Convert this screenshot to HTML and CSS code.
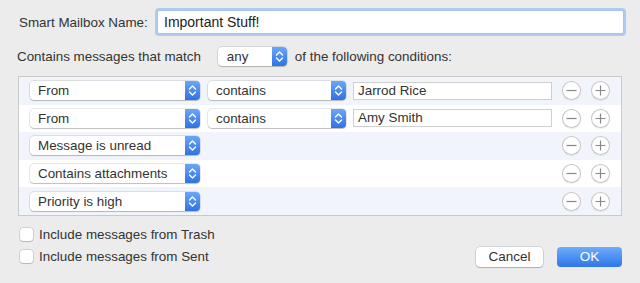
FILE: index.html
```html
<!DOCTYPE html>
<html>
<head>
<meta charset="utf-8">
<link rel="stylesheet" href="styles.css">
</head>
<body>
<div class="dialog">
  <div class="name-row">
    <label class="label">Smart Mailbox Name:</label>
    <div class="name-input">Important Stuff!</div>
  </div>
  <div class="match-row">
    <span>Contains messages that match</span>
    <div class="popup popup-any"><span class="popup-text">any</span><span class="stepper"><svg viewBox="0 0 15 19" width="15" height="19"><path d="M4.5 8 L7.5 5 L10.5 8 M4.5 11 L7.5 14 L10.5 11" fill="none" stroke="#fff" stroke-width="1.4" stroke-linecap="round" stroke-linejoin="round"/></svg></span></div>
    <span>of the following conditions:</span>
  </div>
  <div class="rules">
    <div class="rule alt">
      <div class="popup popup-field"><span class="popup-text">From</span><span class="stepper"><svg viewBox="0 0 15 19" width="15" height="19"><path d="M4.5 8 L7.5 5 L10.5 8 M4.5 11 L7.5 14 L10.5 11" fill="none" stroke="#fff" stroke-width="1.4" stroke-linecap="round" stroke-linejoin="round"/></svg></span></div>
      <div class="popup popup-op"><span class="popup-text">contains</span><span class="stepper"><svg viewBox="0 0 15 19" width="15" height="19"><path d="M4.5 8 L7.5 5 L10.5 8 M4.5 11 L7.5 14 L10.5 11" fill="none" stroke="#fff" stroke-width="1.4" stroke-linecap="round" stroke-linejoin="round"/></svg></span></div>
      <div class="text-field">Jarrod Rice</div>
      <div class="spacer"></div>
      <div class="round-btn"><svg viewBox="0 0 19 19" width="19" height="19"><path d="M4.5 9.5 H14.5" stroke="#888" stroke-width="1.2"/></svg></div>
      <div class="round-btn"><svg viewBox="0 0 19 19" width="19" height="19"><path d="M4.5 9.5 H14.5 M9.5 4.5 V14.5" stroke="#888" stroke-width="1.2"/></svg></div>
    </div>
    <div class="rule">
      <div class="popup popup-field"><span class="popup-text">From</span><span class="stepper"><svg viewBox="0 0 15 19" width="15" height="19"><path d="M4.5 8 L7.5 5 L10.5 8 M4.5 11 L7.5 14 L10.5 11" fill="none" stroke="#fff" stroke-width="1.4" stroke-linecap="round" stroke-linejoin="round"/></svg></span></div>
      <div class="popup popup-op"><span class="popup-text">contains</span><span class="stepper"><svg viewBox="0 0 15 19" width="15" height="19"><path d="M4.5 8 L7.5 5 L10.5 8 M4.5 11 L7.5 14 L10.5 11" fill="none" stroke="#fff" stroke-width="1.4" stroke-linecap="round" stroke-linejoin="round"/></svg></span></div>
      <div class="text-field">Amy Smith</div>
      <div class="spacer"></div>
      <div class="round-btn"><svg viewBox="0 0 19 19" width="19" height="19"><path d="M4.5 9.5 H14.5" stroke="#888" stroke-width="1.2"/></svg></div>
      <div class="round-btn"><svg viewBox="0 0 19 19" width="19" height="19"><path d="M4.5 9.5 H14.5 M9.5 4.5 V14.5" stroke="#888" stroke-width="1.2"/></svg></div>
    </div>
    <div class="rule alt">
      <div class="popup popup-field"><span class="popup-text">Message is unread</span><span class="stepper"><svg viewBox="0 0 15 19" width="15" height="19"><path d="M4.5 8 L7.5 5 L10.5 8 M4.5 11 L7.5 14 L10.5 11" fill="none" stroke="#fff" stroke-width="1.4" stroke-linecap="round" stroke-linejoin="round"/></svg></span></div>
      <div class="spacer"></div>
      <div class="round-btn"><svg viewBox="0 0 19 19" width="19" height="19"><path d="M4.5 9.5 H14.5" stroke="#888" stroke-width="1.2"/></svg></div>
      <div class="round-btn"><svg viewBox="0 0 19 19" width="19" height="19"><path d="M4.5 9.5 H14.5 M9.5 4.5 V14.5" stroke="#888" stroke-width="1.2"/></svg></div>
    </div>
    <div class="rule">
      <div class="popup popup-field"><span class="popup-text">Contains attachments</span><span class="stepper"><svg viewBox="0 0 15 19" width="15" height="19"><path d="M4.5 8 L7.5 5 L10.5 8 M4.5 11 L7.5 14 L10.5 11" fill="none" stroke="#fff" stroke-width="1.4" stroke-linecap="round" stroke-linejoin="round"/></svg></span></div>
      <div class="spacer"></div>
      <div class="round-btn"><svg viewBox="0 0 19 19" width="19" height="19"><path d="M4.5 9.5 H14.5" stroke="#888" stroke-width="1.2"/></svg></div>
      <div class="round-btn"><svg viewBox="0 0 19 19" width="19" height="19"><path d="M4.5 9.5 H14.5 M9.5 4.5 V14.5" stroke="#888" stroke-width="1.2"/></svg></div>
    </div>
    <div class="rule alt">
      <div class="popup popup-field"><span class="popup-text">Priority is high</span><span class="stepper"><svg viewBox="0 0 15 19" width="15" height="19"><path d="M4.5 8 L7.5 5 L10.5 8 M4.5 11 L7.5 14 L10.5 11" fill="none" stroke="#fff" stroke-width="1.4" stroke-linecap="round" stroke-linejoin="round"/></svg></span></div>
      <div class="spacer"></div>
      <div class="round-btn"><svg viewBox="0 0 19 19" width="19" height="19"><path d="M4.5 9.5 H14.5" stroke="#888" stroke-width="1.2"/></svg></div>
      <div class="round-btn"><svg viewBox="0 0 19 19" width="19" height="19"><path d="M4.5 9.5 H14.5 M9.5 4.5 V14.5" stroke="#888" stroke-width="1.2"/></svg></div>
    </div>
  </div>
  <div class="bottom">
    <div class="checks">
      <label class="check"><span class="box"></span>Include messages from Trash</label>
      <label class="check"><span class="box"></span>Include messages from Sent</label>
    </div>
    <div class="buttons">
      <div class="btn cancel">Cancel</div>
      <div class="btn ok">OK</div>
    </div>
  </div>
</div>
</body>
</html>
```
FILE: styles.css
```css
html, body {
  margin: 0;
  padding: 0;
  background: #ececec;
  width: 640px;
  height: 283px;
  overflow: hidden;
}
body {
  font-family: "Liberation Sans", Arial, sans-serif;
  font-size: 13.4px;
  color: #333;
}
.dialog {
  padding: 10px 18px 0 18px;
}
.name-row {
  display: flex;
  align-items: center;
  height: 24px;
}
.label {
  margin-left: 1px;
  width: 138px;
}
.name-input {
  flex: 1;
  height: 24px;
  box-sizing: border-box;
  margin-right: -2px;
  background: #fff;
  border: 1px solid #a9c3e9;
  box-shadow: 0 0 0 2px #b0cbf0;
  border-radius: 2px;
  padding-left: 6px;
  line-height: 22px;
  font-size: 14px;
  color: #222;
}
.match-row {
  display: flex;
  align-items: center;
  height: 20px;
  margin-top: 12px;
}
.match-row > span:first-child {
  margin-left: -1px;
}
.popup {
  display: flex;
  align-items: center;
  height: 19px;
  box-sizing: border-box;
  background: #fff;
  border-radius: 4px;
  box-shadow: 0 0 0 0.5px rgba(0,0,0,0.18), 0 1px 1px rgba(0,0,0,0.18);
  overflow: hidden;
}
.popup-text {
  flex: 1;
  padding-left: 8px;
  white-space: nowrap;
}
.stepper {
  width: 15px;
  height: 19px;
  background: linear-gradient(#6aa6fa, #2f72e3);
  display: flex;
}
.popup-any {
  width: 69px;
  margin-left: 17px;
  margin-right: 8px;
}
.popup-any .popup-text {
  padding-left: 9px;
}
.rules {
  margin-top: 10px;
  border: 1px solid #c9c9c9;
  background: #fff;
  width: 604px;
  box-sizing: border-box;
}
.rule {
  display: flex;
  align-items: center;
  height: 27.6px;
  padding: 0 11px 0 11px;
  background: #fff;
}
.rule.alt {
  background: #f1f5fb;
}
.popup-field {
  width: 170px;
}
.popup-op {
  width: 138px;
  margin-left: 8px;
}
.text-field {
  width: 199px;
  height: 18px;
  box-sizing: border-box;
  margin-left: 7px;
  background: #fff;
  border: 1px solid #cfcfcf;
  padding-left: 4px;
  line-height: 16px;
  white-space: nowrap;
}
.spacer {
  flex: 1;
}
.round-btn {
  width: 19px;
  height: 19px;
  border-radius: 50%;
  background: #fff;
  box-shadow: 0 0 0 1px #c4c4c4 inset, 0 1px 1px rgba(0,0,0,0.08);
  display: flex;
}
.round-btn + .round-btn {
  margin-left: 10px;
}
.bottom {
  display: flex;
  justify-content: space-between;
}
.checks {
  padding-top: 12px;
  display: flex;
  flex-direction: column;
  gap: 8px;
}
.check {
  display: flex;
  align-items: center;
  height: 14px;
}
.box {
  width: 13px;
  height: 13px;
  box-sizing: border-box;
  margin-left: 2px;
  margin-right: 6px;
  background: #fff;
  border-radius: 3px;
  box-shadow: 0 0 0 0.5px rgba(0,0,0,0.22), 0 1px 1px rgba(0,0,0,0.12);
}
.buttons {
  display: flex;
  padding-top: 31px;
}
.btn {
  height: 20px;
  line-height: 20px;
  text-align: center;
  border-radius: 4px;
  font-size: 13.5px;
}
.cancel {
  width: 67px;
  background: #fff;
  box-shadow: 0 0 0 0.5px rgba(0,0,0,0.2), 0 1px 1px rgba(0,0,0,0.18);
  margin-right: 14px;
}
.ok {
  width: 65px;
  background: linear-gradient(#6cacfa, #2f76ea);
  color: #fff;
}
```
